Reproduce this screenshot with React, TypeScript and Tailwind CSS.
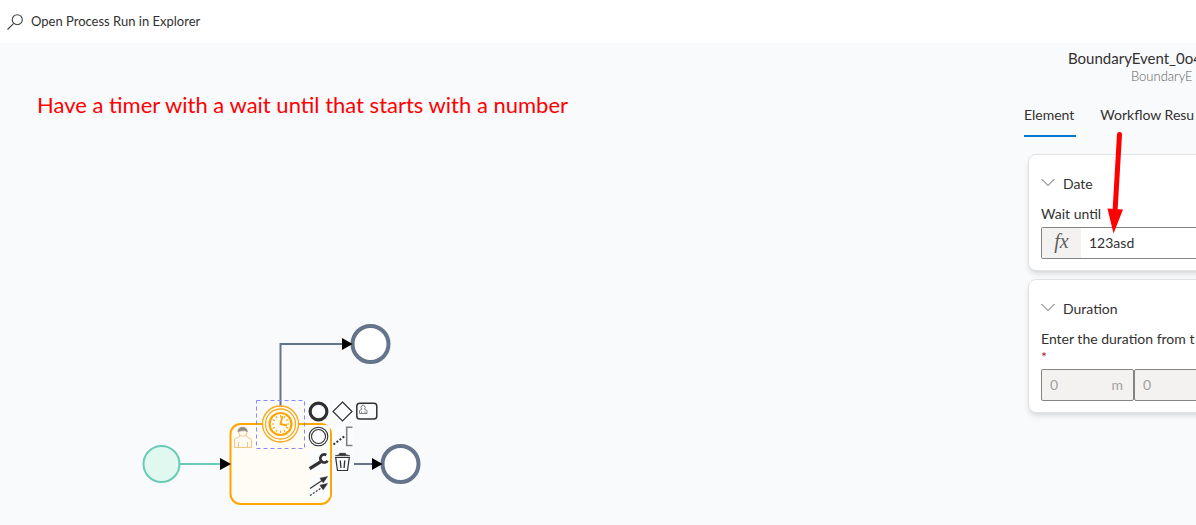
import type { ReactNode } from "react";

function PadButton({ label, children }: { label: string; children: ReactNode }) {
  return (
    <button type="button" aria-label={label} className="flex size-[22px] items-center justify-center bg-[#fafbfd]/85">
      <svg width="22" height="22" viewBox="0 0 22 22" fill="none" stroke="#303033" aria-hidden="true">
        {children}
      </svg>
    </button>
  );
}

function ContextPad() {
  return (
    <div className="absolute left-[308px] top-[357px] grid grid-cols-3 gap-x-0.5 gap-y-[3px]">
      <PadButton label="Append end event">
        <circle cx="10.5" cy="11.5" r="8.4" strokeWidth="3.2" />
      </PadButton>
      <PadButton label="Append gateway">
        <path d="M10.5 2 20 11.5 10.5 21 1 11.5Z" strokeWidth="1.2" />
      </PadButton>
      <PadButton label="Append task">
        <rect x="0.8" y="3.3" width="20" height="15.8" rx="3" strokeWidth="1.5" />
        <path d="M3.5 13.5v-3l2.3-1.3a2 2.3 0 1 1 2.6 0l2.6 1.3v3ZM5.5 11.5v2M9 11.5v2" stroke="#77777c" strokeWidth="0.9" />
      </PadButton>
      <PadButton label="Append intermediate event">
        <circle cx="10.5" cy="11.5" r="9.3" strokeWidth="1.1" />
        <circle cx="10.5" cy="11.5" r="7" strokeWidth="1.1" />
      </PadButton>
      <PadButton label="Append text annotation">
        <path d="M20.5 2.2H14.7V20.5H20.5" stroke="#83817f" strokeWidth="1.6" />
        <path d="M1.5 19.5 13.5 10.5" strokeWidth="2" strokeDasharray="2 1.8" />
      </PadButton>
      <span />
      <PadButton label="Change type">
        <path d="M1.7 18.7 12.5 11.8" strokeWidth="3.2" />
        <path d="M18.3 5A4 4 0 1 0 19.6 10.8" strokeWidth="2.7" />
      </PadButton>
      <PadButton label="Remove">
        <path d="M3.7 7.5h13.6L15.5 20.5H5.5Z" strokeWidth="1.2" />
        <path d="M3.2 5.8 7.5 4.5V3.3h6V4.5l4.3 1.3Z" fill="#303033" strokeWidth="0.6" />
        <path d="m8.3 10.5.6 7.5M12.7 10.5l-.6 7.5" strokeWidth="1.3" />
      </PadButton>
      <span />
      <PadButton label="Connect">
        <path d="M2 13.5 14 5.5" strokeWidth="1.2" />
        <path d="m12 3.2 7.5-1.6-4.3 6.2Z" fill="#303033" strokeWidth="0.6" />
        <path d="M2 20.5 14 12.5" strokeWidth="1.2" strokeDasharray="2 1.5" />
        <path d="m12 10.2 7.5-1.6-4.3 6.2Z" fill="#303033" strokeWidth="0.6" />
      </PadButton>
    </div>
  );
}

const ticks = Array.from({ length: 12 }, (_, i) => i * 30);

function Diagram() {
  return (
    <svg className="absolute left-[130px] top-[267px]" width="300" height="200" viewBox="130 310 300 200" fill="none" role="img" aria-label="Process diagram">
      <circle cx="161.5" cy="464" r="18" fill="#e0f8f0" stroke="#69cbb5" strokeWidth="2" />
      <path d="M180 464H221" stroke="#69cbb5" strokeWidth="2" />
      <rect x="230.5" y="424" width="100.5" height="80" rx="10" fill="#fffcf5" stroke="#ffa500" strokeWidth="2" />
      <path d="M220 458 231 464 220 470Z" fill="#000" />
      <path d="M280.5 406V344H343" stroke="#64748b" strokeWidth="2" />
      <circle cx="370.5" cy="344" r="18" fill="#fff" stroke="#64748b" strokeWidth="4" />
      <path d="M342 338 352.5 344 342 350Z" fill="#000" />
      <path d="M354 464H373" stroke="#64748b" strokeWidth="2" />
      <circle cx="400.5" cy="464" r="18" fill="#fff" stroke="#64748b" strokeWidth="4" />
      <path d="M372 458 382.5 464 372 470Z" fill="#000" />
      <g stroke="#f3c580" strokeWidth="1">
        <path d="M234.5 447.5V439.5L240 436V433.5H246V436L251.5 439.5V447.5ZM238.5 442v5.5M247.5 442v5.5" fill="#fffcf5" />
        <path d="M238.5 431c0 7 8.5 7 8.5 0" fill="#fffcf5" />
        <path d="M238 432c-1-6 9.5-7 9.5 0-3-2-6-1-9.5 0Z" fill="#8e8c85" stroke="#b5a88d" strokeWidth="0.6" />
      </g>
      <circle cx="280.5" cy="424" r="18" fill="#fffdf8" stroke="#f9a91c" strokeWidth="1.3" />
      <circle cx="280.5" cy="424" r="15" stroke="#f9a91c" strokeWidth="1.3" />
      <g stroke="#ffa500">
        <circle cx="280.5" cy="424" r="11" strokeWidth="2.2" />
        {ticks.map((a) => (
          <path key={a} d="M280.5 415v2.5" strokeWidth="1" transform={`rotate(${a} 280.5 424)`} />
        ))}
        <path d="M282.5 416 280.5 424 287 425.5" strokeWidth="1.8" />
      </g>
      <rect x="256.5" y="400.5" width="48" height="48" stroke="#8888f8" strokeDasharray="4 3" />
    </svg>
  );
}

function CardHeader({ title }: { title: string }) {
  return (
    <button type="button" aria-expanded="true" className="flex h-[38px] items-center gap-2 text-[14px] text-[#323130]">
      <svg width="14" height="10" viewBox="0 0 14 10" fill="none" stroke="#605e5c" strokeWidth="1" aria-hidden="true">
        <path d="m.5 1 6.5 6.5L13.5 1" />
      </svg>
      {title}
    </button>
  );
}

function Properties() {
  return (
    <aside className="relative w-[180px] shrink-0 overflow-hidden whitespace-nowrap pl-2 pt-1.5">
      <h2 className="pl-11 text-[15px] leading-[18px] text-[#323130]">BoundaryEvent_0o4</h2>
      <p className="pl-[107px] text-[13px] font-light leading-[18px] text-[#605e5c]">BoundaryE</p>
      <div role="tablist" className="mt-2 flex gap-6 text-[14px] text-[#323130]">
        <button type="button" role="tab" aria-selected="true" className="h-11 shrink-0 border-b-2 border-[#0078d4] pr-0.5">
          Element
        </button>
        <button type="button" role="tab" aria-selected="false" className="h-11 shrink-0 border-b-2 border-transparent pr-0.5">
          Workflow Resu
        </button>
      </div>
      <div className="ml-1 mt-[17px] flex w-80 flex-col gap-2">
        <section className="rounded-lg border border-[#e1e2e4] bg-white px-3 pb-[11px] pt-[9px] shadow-md">
          <CardHeader title="Date" />
          <label htmlFor="wait" className="mb-[3px] mt-0.5 block text-[14px] leading-5 text-[#323130]">
            Wait until
          </label>
          <div className="flex h-8 overflow-hidden rounded-[2px] border border-[#868482] bg-white">
            <span className="flex w-[39px] items-center justify-center bg-[#f3f2f1] pb-1 font-['Liberation_Serif',serif] text-[20px] italic leading-5 text-[#605e5c]">
              fx
            </span>
            <input id="wait" defaultValue="123asd" className="min-w-0 flex-1 px-2 pb-0.5 text-[14px] text-[#323130] outline-none" />
          </div>
        </section>
        <section className="rounded-lg border border-[#e1e2e4] bg-white px-3 pb-[11px] pt-[9px] shadow-md">
          <CardHeader title="Duration" />
          <label htmlFor="minutes" className="mt-0.5 block text-[14px] leading-5 text-[#323130]">
            Enter the duration from t
            <span className="block pb-1 leading-4 text-[#a4262c]">*</span>
          </label>
          <div className="flex text-[14px] text-[#a19f9d]">
            <div className="flex h-8 w-[93px] items-center rounded-[2px] border border-[#868482] bg-[#f3f2f1] px-2 pb-0.5">
              <input id="minutes" disabled defaultValue="0" className="min-w-0 flex-1" />
              <span className="pr-0.5">m</span>
            </div>
            <div className="flex h-8 w-[93px] items-center rounded-[2px] border border-[#868482] bg-[#f3f2f1] px-2 pb-0.5">
              <input aria-label="Seconds" disabled defaultValue="0" className="min-w-0 flex-1" />
            </div>
          </div>
        </section>
      </div>
      <svg className="pointer-events-none absolute left-[88px] top-[86px]" width="24" height="108" viewBox="1104 129 24 108" aria-hidden="true">
        <path d="M1119.5 134.5 1115 212" stroke="#f00" strokeWidth="5" strokeLinecap="round" />
        <path d="M1107.5 208.5 1123 209.5 1113.5 233.5Z" fill="#f00" />
      </svg>
    </aside>
  );
}

export default function App() {
  return (
    <div className="flex min-h-screen flex-col overflow-hidden bg-[#f9fafc] font-['Lato',sans-serif]">
      <header className="flex h-[43px] items-center bg-white px-[7px]">
        <button type="button" className="flex items-center gap-2 text-[13px] text-[#323130]">
          <svg width="16" height="16" viewBox="0 0 16 16" fill="none" stroke="#404040" strokeWidth="1.1" aria-hidden="true">
            <circle cx="10.3" cy="5.7" r="5" />
            <path d="M6.7 9.3.5 15.5" />
          </svg>
          Open Process Run in Explorer
        </button>
      </header>
      <main className="flex flex-1">
        <div className="relative min-w-0 flex-1">
          <h1 className="pl-[37px] pt-12 text-[22px] leading-7 text-[#f00]">
            Have a timer with a wait until that starts with a number
          </h1>
          <Diagram />
          <ContextPad />
        </div>
        <Properties />
      </main>
    </div>
  );
}
